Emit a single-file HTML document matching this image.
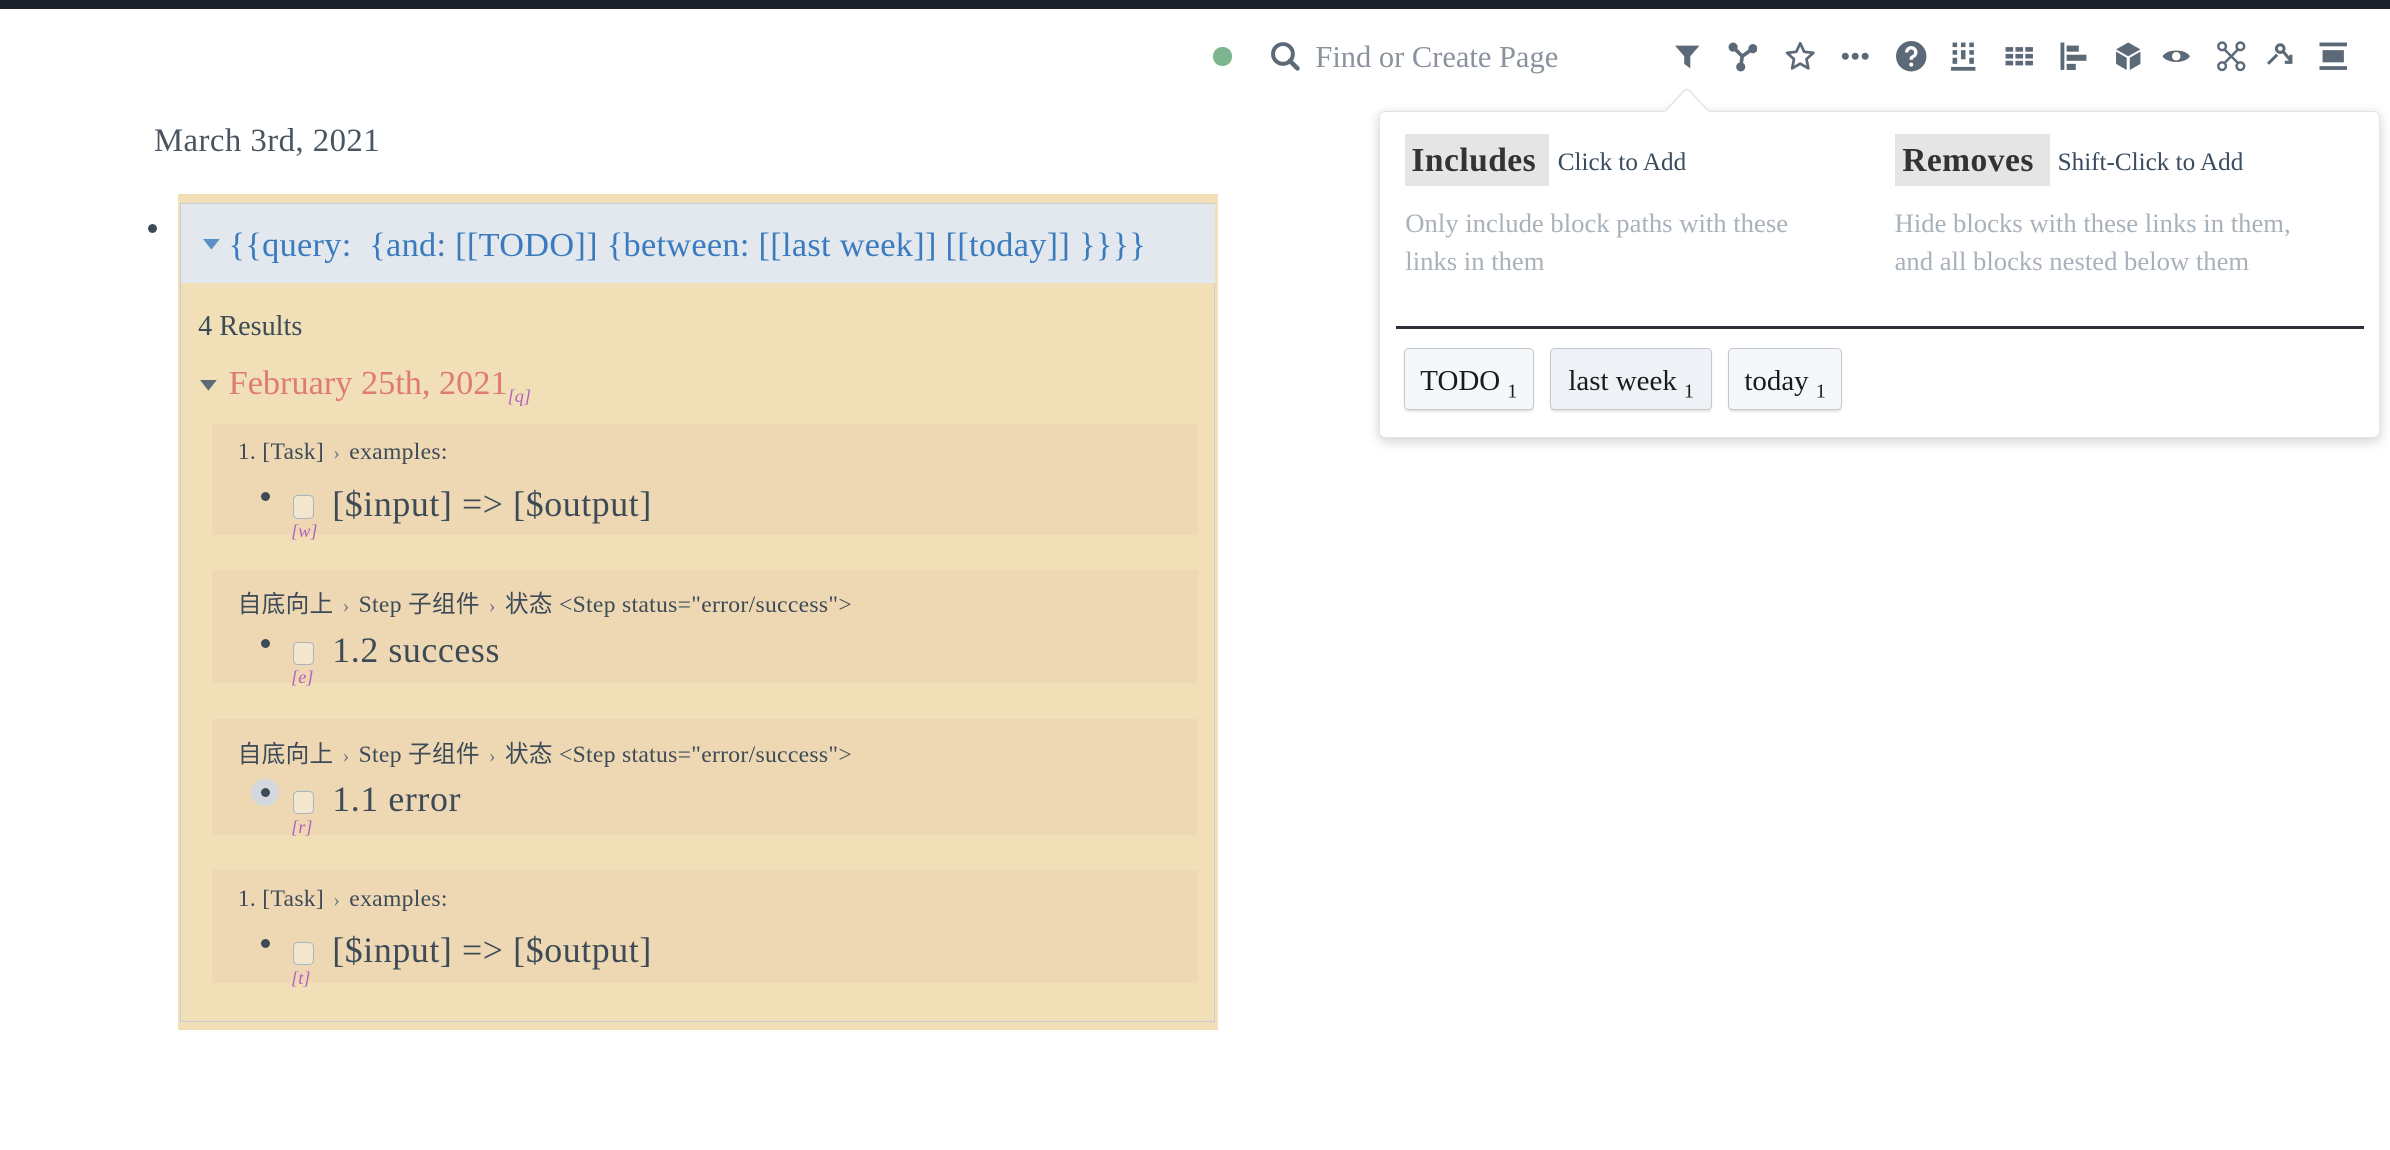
<!DOCTYPE html>
<html><head><meta charset="utf-8"><style>
html{zoom:1.5242}
body{margin:0;width:1568px;height:754px;overflow:hidden;background:#fff;position:relative;font-family:"Liberation Serif","Noto Serif CJK SC",serif;color:#3d4a57}
.a{position:absolute;white-space:nowrap}
.ic{position:absolute;top:27px;width:20px;height:20px}
.card{position:absolute;left:139px;width:647px;background:#eed8b3}
.bc{position:absolute;left:17px;top:10px;font-size:15.5px;color:#3d4a57;font-family:"Liberation Serif","Noto Sans CJK SC",serif;letter-spacing:0.2px;white-space:nowrap}
.bc i{font-style:normal;color:#6b7785;padding:0 6px;font-size:13px}
.it{position:absolute;left:32px;top:40px;font-size:23.5px;line-height:26px;white-space:nowrap;width:600px}
.it .dot{position:absolute;left:0;top:5px;width:6px;height:6px;border-radius:3px;background:#3d4a57}
.it .cb{position:absolute;left:21px;top:7px;width:13px;height:14px;border:1px solid #a9b4c0;border-radius:3px;background:#f2e6cf}
.it .k{position:absolute;left:20px;top:18px;font-size:12px;font-style:italic;color:#b35fc0}
.it .t{position:absolute;left:47px;top:0px;letter-spacing:0.4px}
.btn{position:absolute;top:228px;height:40px;background:#f5f8fa;border:1px solid #c5c9ce;border-radius:3px;font-size:19px;line-height:42px;color:#1a1a1a;text-align:center;box-shadow:0 1px 1px rgba(0,0,0,.1);white-space:nowrap}
.btn sub{font-size:13px;vertical-align:-5px}
</style></head><body>
<div class="a" style="left:0;top:0;width:1568px;height:6px;background:#1c2028"></div>
<div class="a" style="left:796px;top:31px;width:12px;height:12px;border-radius:6px;background:#7db58e"></div>
<svg class="ic" style="left:833px" viewBox="0 0 20 20"><circle cx="8.5" cy="8.5" r="6.5" fill="none" stroke="#5c6977" stroke-width="2.6"/><path d="M13 13l5 5" stroke="#5c6977" stroke-width="3" stroke-linecap="round"/></svg>
<div class="a" style="left:863px;top:26px;font-size:20px;color:#8a939d">Find or Create Page</div>
<svg class="ic" style="left:1097px" viewBox="0 0 20 20"><path d="M2 3h16l-6 7v8l-4-3v-5z" fill="#5c6977"/></svg>
<svg class="ic" style="left:1133px" viewBox="0 0 20 20" fill="#5c6977"><circle cx="4" cy="4" r="3"/><circle cx="17" cy="5" r="3"/><circle cx="9" cy="17" r="3"/><path d="M4 4l6 6 7-5M10 10l-1 7" stroke="#5c6977" stroke-width="2.4" fill="none"/></svg>
<svg class="ic" style="left:1171px" viewBox="0 0 20 20"><path d="M10 1.5l2.6 5.6 6 .7-4.5 4.1 1.2 6-5.3-3-5.3 3 1.2-6L1.4 7.8l6-.7z" fill="none" stroke="#5c6977" stroke-width="1.8" stroke-linejoin="round"/></svg>
<svg class="ic" style="left:1207px" viewBox="0 0 20 20" fill="#5c6977"><circle cx="3.5" cy="10" r="2.3"/><circle cx="10" cy="10" r="2.3"/><circle cx="16.5" cy="10" r="2.3"/></svg>
<svg class="ic" style="left:1244px" viewBox="0 0 20 20"><circle cx="10" cy="10" r="10" fill="#5c6977"/><path d="M7 7.5a3 3 0 1 1 4 2.8c-1 .5-1 1-1 2" stroke="#fff" stroke-width="2.2" fill="none"/><circle cx="10" cy="15.5" r="1.3" fill="#fff"/></svg>
<svg class="ic" style="left:1278px" viewBox="0 0 20 20" fill="#5c6977"><rect x="3" y="1" width="3" height="3"/><rect x="8.5" y="1" width="3" height="3"/><rect x="14" y="1" width="3" height="3"/><rect x="3" y="6" width="3" height="3"/><rect x="8.5" y="6" width="3" height="6"/><rect x="14" y="6" width="3" height="3"/><rect x="3" y="11" width="3" height="4"/><rect x="14" y="11" width="3" height="4"/><rect x="2" y="17" width="16" height="2.5"/></svg>
<svg class="ic" style="left:1315px" viewBox="0 0 20 20" fill="#5c6977"><rect x="1" y="4" width="5" height="3"/><rect x="7.5" y="4" width="5" height="3"/><rect x="14" y="4" width="5" height="3"/><rect x="1" y="8.5" width="5" height="3"/><rect x="7.5" y="8.5" width="5" height="3"/><rect x="14" y="8.5" width="5" height="3"/><rect x="1" y="13" width="5" height="3"/><rect x="7.5" y="13" width="5" height="3"/><rect x="14" y="13" width="5" height="3"/></svg>
<svg class="ic" style="left:1351px" viewBox="0 0 20 20" fill="#5c6977"><rect x="1" y="1" width="2.5" height="18"/><rect x="5" y="3" width="8" height="4"/><rect x="5" y="9" width="13" height="4"/><rect x="5" y="15" width="6" height="4"/></svg>
<svg class="ic" style="left:1386px" viewBox="0 0 20 20" fill="#5c6977"><path d="M10 1l8 4.5-8 4.5-8-4.5z"/><path d="M2 7l7 4v8l-7-4zM18 7l-7 4v8l7-4z"/></svg>
<svg class="ic" style="left:1418px" viewBox="0 0 20 20"><path d="M1 10c3-5 15-5 18 0-3 5-15 5-18 0z" fill="#5c6977"/><circle cx="10" cy="10" r="2.8" fill="#fff"/></svg>
<svg class="ic" style="left:1454px" viewBox="0 0 20 20" fill="none" stroke="#5c6977" stroke-width="1.6"><circle cx="4" cy="3.5" r="2.5"/><circle cx="16" cy="3.5" r="2.5"/><circle cx="4" cy="16.5" r="2.5"/><circle cx="16" cy="16.5" r="2.5"/><path d="M5.5 5.5l9 9M14.5 5.5l-9 9"/></svg>
<svg class="ic" style="left:1486px" viewBox="0 0 20 20" fill="none" stroke="#5c6977" stroke-width="2"><circle cx="10" cy="5" r="2.5"/><path d="M2 15l6-6M12 7l5 6M17 9v5h-4"/></svg>
<svg class="ic" style="left:1521px" viewBox="0 0 20 20" fill="#5c6977"><rect x="1" y="1" width="18" height="2.5"/><rect x="3" y="6" width="14" height="8"/><rect x="1" y="16.5" width="18" height="2.5"/></svg>

<div class="a" style="left:905px;top:73px;width:655px;height:213px;background:#fff;border:1px solid #e1e4e8;border-radius:4px;box-shadow:0 2px 8px rgba(0,0,0,.18)"></div>
<svg class="a" style="left:1092px;top:58px" width="30" height="17"><path d="M0 16L13 2 Q15 0 17 2L30 16" fill="#fff" stroke="#e1e4e8"/><rect x="0" y="15.5" width="30" height="2" fill="#fff"/></svg>
<div class="a" style="left:922px;top:88px;width:94px;height:34px;background:#e5e5e5"></div>
<div class="a" style="left:926px;top:93px;font-size:22px;font-weight:bold;color:#333;letter-spacing:0.3px">Includes</div>
<div class="a" style="left:1022px;top:98px;font-size:16.5px;color:#394b5e">Click to Add</div>
<div class="a" style="left:1243px;top:88px;width:102px;height:34px;background:#e5e5e5"></div>
<div class="a" style="left:1248px;top:93px;font-size:22px;font-weight:bold;color:#333;letter-spacing:0.3px">Removes</div>
<div class="a" style="left:1350px;top:98px;font-size:16.5px;color:#394b5e">Shift-Click to Add</div>
<div class="a" style="left:922px;top:134px;font-size:17.5px;line-height:25px;color:#a9b1ba">Only include block paths with these<br>links in them</div>
<div class="a" style="left:1243px;top:134px;font-size:17.5px;line-height:25px;color:#a9b1ba">Hide blocks with these links in them,<br>and all blocks nested below them</div>
<div class="a" style="left:916px;top:214px;width:635px;height:2px;background:#2b3038"></div>
<div class="btn" style="left:921px;width:84px">TODO <sub>1</sub></div>
<div class="btn" style="left:1017px;width:105px;background:#eef2f6">last week <sub>1</sub></div>
<div class="btn" style="left:1134px;width:73px">today <sub>1</sub></div>

<div class="a" style="left:101px;top:81px;font-size:21.5px;letter-spacing:0.3px;color:#4a5560">March 3rd, 2021</div>
<div class="a" style="left:97px;top:147px;width:6px;height:6px;border-radius:3px;background:#3d4a57"></div>
<div class="a" style="left:117px;top:127px;width:682px;height:549px;background:#f1dfb8"></div>
<div class="a" style="left:118px;top:133px;width:678px;height:536px;border:1px solid #c6ccd2"></div>
<div class="a" style="left:119px;top:134px;width:678px;height:52px;background:#e2e8ed"></div>
<svg class="a" style="left:133px;top:157px" width="12" height="8"><path d="M0 0h11L5.5 7z" fill="#5b8fc6"/></svg>
<div class="a" style="left:150px;top:148px;font-size:22.5px;letter-spacing:0.2px;color:#3a7bbf">{{query:&nbsp; {and: [[TODO]] {between: [[last week]] [[today]] }}}}</div>
<div class="a" style="left:130px;top:204px;font-size:18.5px;color:#3d4a57">4 Results</div>
<svg class="a" style="left:131px;top:249px" width="12" height="8"><path d="M0 0h11L5.5 7z" fill="#5c6977"/></svg>
<div class="a" style="left:150px;top:239px;font-size:22.5px;color:#e07a74">February 25th, 2021<sub style="font-size:12px;font-style:italic;color:#b35fc0">[q]</sub></div>

<div class="card" style="top:278px;height:73px"><div class="bc">1. [Task]<i>›</i>examples:</div><div class="it"><span class="dot"></span><span class="cb"></span><span class="k">[w]</span><span class="t">[$input] =&gt; [$output]</span></div></div>
<div class="card" style="top:374px;height:74px"><div class="bc">自底向上<i>›</i>Step 子组件<i>›</i>状态 &lt;Step status="error/success"&gt;</div><div class="it"><span class="dot"></span><span class="cb"></span><span class="k">[e]</span><span class="t">1.2 success</span></div></div>
<div class="card" style="top:472px;height:76px"><div class="bc">自底向上<i>›</i>Step 子组件<i>›</i>状态 &lt;Step status="error/success"&gt;</div><div class="it"><span class="a" style="left:-6px;top:-1px;width:18px;height:18px;border-radius:9px;background:#d3d9de"></span><span class="dot"></span><span class="cb"></span><span class="k">[r]</span><span class="t">1.1 error</span></div></div>
<div class="card" style="top:571px;height:74px"><div class="bc">1. [Task]<i>›</i>examples:</div><div class="it"><span class="dot"></span><span class="cb"></span><span class="k">[t]</span><span class="t">[$input] =&gt; [$output]</span></div></div>
</body></html>
